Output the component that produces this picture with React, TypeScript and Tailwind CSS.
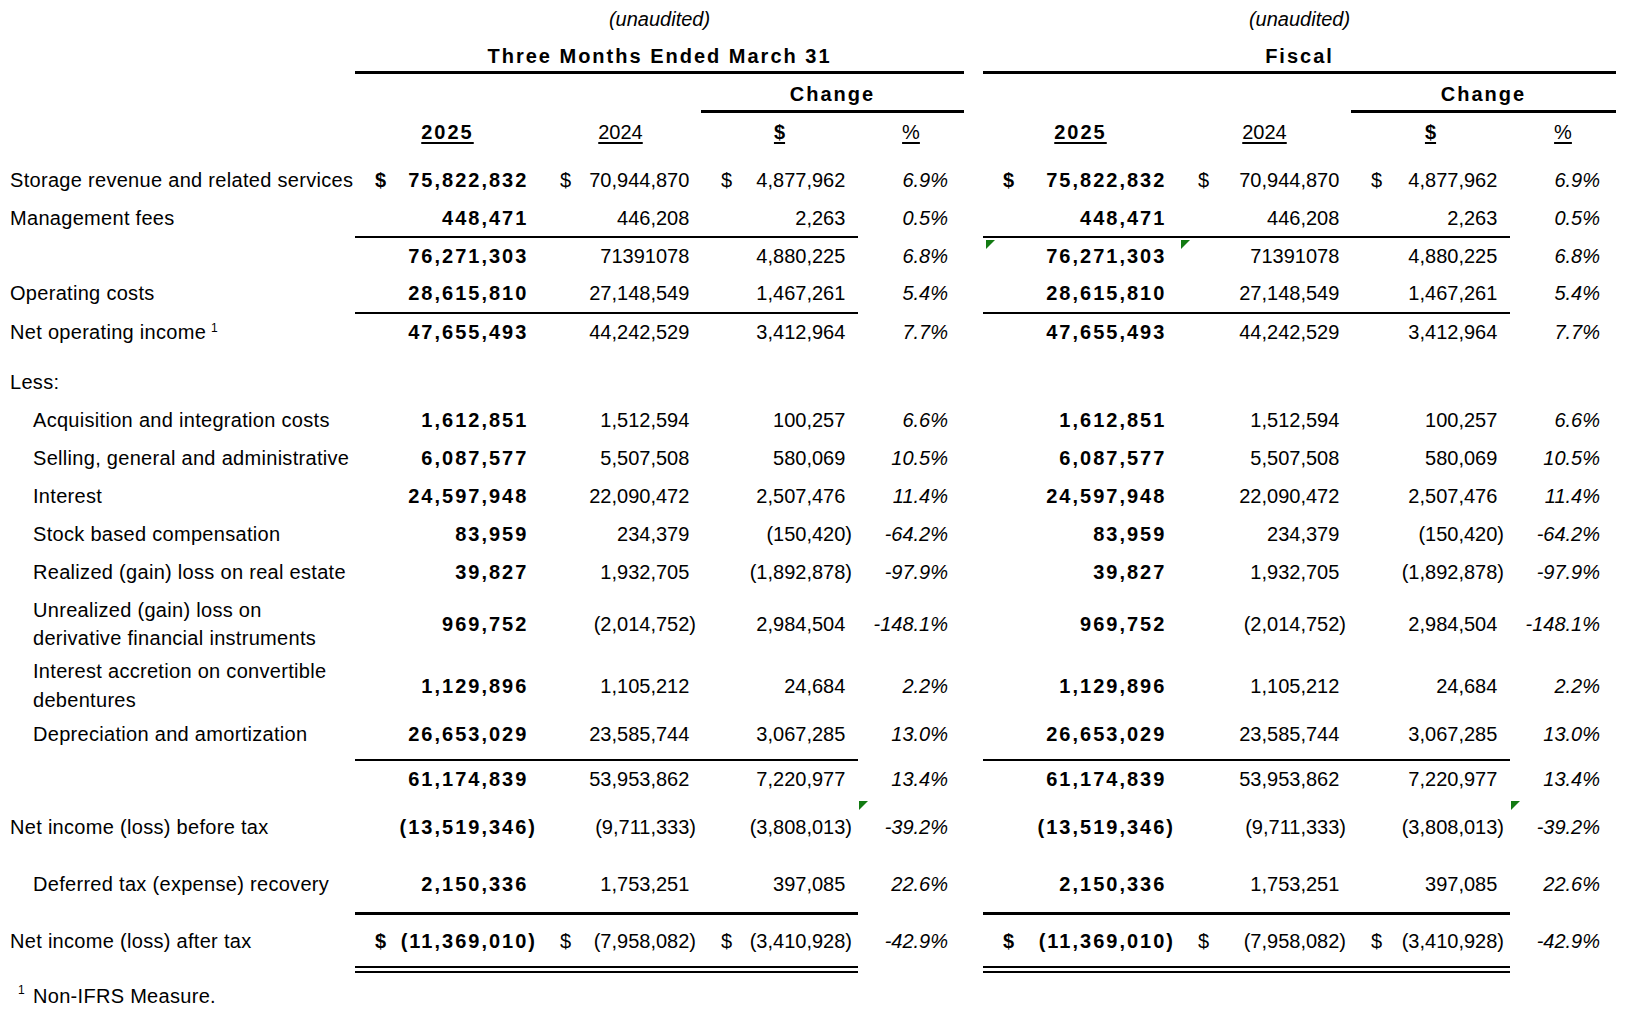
import React from "react";

type Vals = [string, string, string, string];

type Line = {
  label?: string[];
  sup?: boolean;
  indent?: boolean;
  lead?: string;
  vals?: Vals;
  dollar?: boolean;
  h: string;
  pad?: string;
  top?: string;
  dbl?: boolean;
  marks?: number[][];
  markPos?: string;
};

const lines: Line[] = [
  { label: ["Storage revenue and related services"], vals: ["75,822,832", "70,944,870", "4,877,962", "6.9%"], dollar: true, h: "h-[43px]", pad: "pt-[4px]" },
  { label: ["Management fees"], vals: ["448,471", "446,208", "2,263", "0.5%"], h: "h-[37px]" },
  { vals: ["76,271,303", "71391078", "4,880,225", "6.8%"], h: "h-[38px]", top: "h-[2px]", marks: [[], [0, 1]], markPos: "left-[3px] top-[4px]" },
  { label: ["Operating costs"], vals: ["28,615,810", "27,148,549", "1,467,261", "5.4%"], h: "h-[38px]" },
  { label: ["Net operating income"], sup: true, vals: ["47,655,493", "44,242,529", "3,412,964", "7.7%"], h: "h-[45px]", pad: "pb-[7px]", top: "h-[2px]" },
  { label: ["Less:"], h: "h-[44px]", pad: "pt-[6px]" },
  { label: ["Acquisition and integration costs"], indent: true, vals: ["1,612,851", "1,512,594", "100,257", "6.6%"], h: "h-[38px]" },
  { label: ["Selling, general and administrative"], indent: true, vals: ["6,087,577", "5,507,508", "580,069", "10.5%"], h: "h-[38px]" },
  { label: ["Interest"], indent: true, vals: ["24,597,948", "22,090,472", "2,507,476", "11.4%"], h: "h-[38px]" },
  { label: ["Stock based compensation"], indent: true, vals: ["83,959", "234,379", "(150,420)", "-64.2%"], h: "h-[38px]" },
  { label: ["Realized (gain) loss on real estate"], indent: true, vals: ["39,827", "1,932,705", "(1,892,878)", "-97.9%"], h: "h-[37px]" },
  { label: ["Unrealized (gain) loss on", "derivative financial instruments"], indent: true, lead: "leading-[28px]", vals: ["969,752", "(2,014,752)", "2,984,504", "-148.1%"], h: "h-[67px]" },
  { label: ["Interest accretion on convertible", "debentures"], indent: true, lead: "leading-[29px]", vals: ["1,129,896", "1,105,212", "24,684", "2.2%"], h: "h-[58px]" },
  { label: ["Depreciation and amortization"], indent: true, vals: ["26,653,029", "23,585,744", "3,067,285", "13.0%"], h: "h-[44px]", pad: "pb-[7px]" },
  { vals: ["61,174,839", "53,953,862", "7,220,977", "13.4%"], h: "h-[40px]", pad: "pb-[2px]", top: "h-[2px]" },
  { label: ["Net income (loss) before tax"], vals: ["(13,519,346)", "(9,711,333)", "(3,808,013)", "-39.2%"], h: "h-[56px]", marks: [[3], [3]], markPos: "left-[1px] top-[2px]" },
  { label: ["Deferred tax (expense) recovery"], indent: true, vals: ["2,150,336", "1,753,251", "397,085", "22.6%"], h: "h-[57px]" },
  { label: ["Net income (loss) after tax"], vals: ["(11,369,010)", "(7,958,082)", "(3,410,928)", "-42.9%"], dollar: true, h: "h-[61px]", top: "h-[3px]", dbl: true },
];

const Mark = ({ pos }: { pos?: string }) => (
  <svg className={`absolute ${pos ?? ""}`} width="9" height="9" viewBox="0 0 9 9">
    <polygon points="0,0 9,0 0,9" fill="#127a12" />
  </svg>
);

const Num = ({ v, bold }: { v: string; bold: boolean }) => {
  const neg = v.startsWith("(");
  return (
    <span className={bold ? "font-bold tracking-[2px]" : ""}>
      {v}
      {!neg && <span className="invisible">)</span>}
    </span>
  );
};

const padR = ["pr-[3px]", "pr-[5px]", "pr-[6px]", "pr-4"];

function DataRow({ l }: { l: Line }) {
  const cell = (key: string, on: boolean, children: React.ReactNode, extra = "", mark = false) => (
    <div key={key} className={`relative flex flex-col ${l.h}`}>
      {l.top && <div className={`shrink-0 ${l.top} ${on ? "bg-black" : ""}`} />}
      <div className={`flex-1 flex items-center ${l.pad ?? ""} ${extra}`}>{children}</div>
      {l.dbl && <div className={`shrink-0 h-[7px] ${on ? "border-y-2 border-black" : ""}`} />}
      {mark && <Mark pos={l.markPos} />}
    </div>
  );

  const section = (side: number) => {
    const v = l.vals;
    const m = l.marks?.[side] ?? [];
    return [0, 1, 2, 3].map((c) => {
      let content: React.ReactNode = null;
      if (v) {
        content =
          c === 3 ? (
            <span className="italic">{v[3]}</span>
          ) : (
            <>
              <span className={c === 0 ? "font-bold" : ""}>{l.dollar ? "$" : ""}</span>
              <Num v={v[c]} bold={c === 0} />
            </>
          );
      }
      const just = c === 3 ? "justify-end" : "justify-between";
      return cell(`${side}-${c}`, c < 3, content, `${just} pl-5 ${padR[c]}`, m.includes(c));
    });
  };

  const label = l.label ? (
    <div className={`${l.indent ? "pl-[33px]" : "pl-2.5"} tracking-[0.3px] whitespace-nowrap ${l.lead ?? ""}`}>
      {l.label.map((t, i) => (
        <div key={i}>
          {t}
          {l.sup && <span className="ml-[5px] text-[12px] relative -top-[7px]">1</span>}
        </div>
      ))}
    </div>
  ) : null;

  return (
    <>
      {cell("label", false, label)}
      {section(0)}
      {cell("gap", false, null)}
      {section(1)}
    </>
  );
}

function Header() {
  const sec = (title: string) => (
    <div className="col-span-4 h-[37px] flex flex-col">
      <div className="flex-1 flex items-center justify-center pt-[4px] font-bold tracking-[2px]">{title}</div>
      <div className="h-[3px] bg-black shrink-0" />
    </div>
  );
  const change = () => (
    <>
      <div className="col-span-2 h-[39px]" />
      <div className="col-span-2 h-[39px] flex flex-col">
        <div className="flex-1 flex items-center justify-center pt-[3px] font-bold tracking-[2px]">Change</div>
        <div className="h-[3px] bg-black shrink-0" />
      </div>
    </>
  );
  const years = () => (
    <>
      <div className="h-[43px] flex items-center justify-center pb-[5px]">
        <span className="font-bold tracking-[2px] underline decoration-2 underline-offset-[3px]">2025</span>
      </div>
      <div className="h-[43px] flex items-center justify-center pb-[5px]">
        <span className="underline decoration-2 underline-offset-[3px]">2024</span>
      </div>
      <div className="h-[43px] flex items-center justify-center pb-[5px]">
        <span className="font-bold underline decoration-2 underline-offset-[3px]">$</span>
      </div>
      <div className="h-[43px] flex items-center justify-center pb-[5px]">
        <span className="underline decoration-2 underline-offset-[3px]">%</span>
      </div>
    </>
  );
  return (
    <>
      <div className="h-[37px]" />
      <div className="col-span-4 h-[37px] flex items-center justify-center italic">(unaudited)</div>
      <div />
      <div className="col-span-4 h-[37px] flex items-center justify-center italic">(unaudited)</div>

      <div className="h-[37px]" />
      {sec("Three Months Ended March 31")}
      <div />
      {sec("Fiscal")}

      <div className="h-[39px]" />
      {change()}
      <div />
      {change()}

      <div className="h-[43px]" />
      {years()}
      <div />
      {years()}
    </>
  );
}

export default function App() {
  return (
    <div className="w-[1627px] h-[1022px] bg-white text-black text-[20px] leading-none font-['Liberation_Sans',Arial,sans-serif]">
      <div className="grid grid-cols-[355px_185px_161px_157px_106px_19px_195px_173px_159px_106px]">
        <Header />
        {lines.map((l, i) => (
          <DataRow key={i} l={l} />
        ))}
      </div>
      <div className="h-[46px] flex items-center pl-[18px] tracking-[0.3px]">
        <span className="text-[12px] relative -top-[6px]">1</span>
        <span className="ml-[8px]">Non-IFRS Measure.</span>
      </div>
    </div>
  );
}
